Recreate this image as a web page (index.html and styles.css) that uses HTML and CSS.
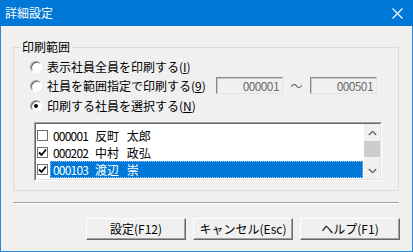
FILE: index.html
```html
<!DOCTYPE html>
<html lang="ja">
<head>
    <meta charset="utf-8">
    <link rel="stylesheet" href="styles.css">
</head>
<body>
    <div class="window">
        <div class="titlebar">
            <span class="title">詳細設定</span>
            <svg class="close" width="11" height="11" viewBox="0 0 11 11">
                <path d="M0.5 0.5 L10.5 10.5 M10.5 0.5 L0.5 10.5" stroke="#fff" stroke-width="1.1" fill="none"/>
            </svg>
        </div>
        <div class="dialog">
            <fieldset class="group">
                <legend>印刷範囲</legend>
                <div class="radio-row">
                    <span class="radio"></span>
                    <span>表示社員全員を印刷する(<u>I</u>)</span>
                </div>
                <div class="radio-row">
                    <span class="radio"></span>
                    <span>社員を範囲指定で印刷する(<u>9</u>)</span>
                    <span class="range">
                        <span class="field">000001</span>
                        <span class="tilde">～</span>
                        <span class="field">000501</span>
                    </span>
                </div>
                <div class="radio-row third">
                    <span class="radio checked"></span>
                    <span>印刷する社員を選択する(<u>N</u>)</span>
                </div>
                <div class="listbox">
                    <div class="list-inner">
                        <div class="rows">
                            <div class="row">
                                <span class="check"></span>
                                <span class="item"><span class="code">000001</span><span class="name">反町 太郎</span></span>
                            </div>
                            <div class="row">
                                <span class="check">
                                    <svg width="9" height="9" viewBox="0 0 9 9"><path d="M1 4.5 L3.5 7 L8 1.5" stroke="#000" stroke-width="1.8" fill="none"/></svg>
                                </span>
                                <span class="item"><span class="code">000202</span><span class="name">中村 政弘</span></span>
                            </div>
                            <div class="row">
                                <span class="check">
                                    <svg width="9" height="9" viewBox="0 0 9 9"><path d="M1 4.5 L3.5 7 L8 1.5" stroke="#000" stroke-width="1.8" fill="none"/></svg>
                                </span>
                                <span class="item selected"><span class="code">000103</span><span class="name">渡辺 崇</span></span>
                            </div>
                        </div>
                        <div class="scrollbar">
                            <span class="arrow">
                                <svg width="9" height="6" viewBox="0 0 9 6"><path d="M0.8 5 L4.5 1.3 L8.2 5" stroke="#606060" stroke-width="1.3" fill="none"/></svg>
                            </span>
                            <span class="track"><span class="thumb"></span></span>
                            <span class="arrow">
                                <svg width="9" height="6" viewBox="0 0 9 6"><path d="M0.8 1 L4.5 4.7 L8.2 1" stroke="#606060" stroke-width="1.3" fill="none"/></svg>
                            </span>
                        </div>
                    </div>
                </div>
            </fieldset>
            <div class="separator"></div>
            <div class="buttons">
                <button class="button">設定(F12)</button>
                <button class="button">キャンセル(Esc)</button>
                <button class="button">ヘルプ(F1)</button>
            </div>
        </div>
    </div>
</body>
</html>
```

FILE: styles.css
```css
body {
    margin: 0;
    font-family: "Noto Sans CJK JP", "Noto Sans", sans-serif;
    font-size: 12px;
    line-height: 14px;
    color: #000;
    background: #f0f0f0;
}

.window {
    width: 413px;
    height: 252px;
    display: flex;
    flex-direction: column;
}

.titlebar {
    height: 26px;
    flex: none;
    background: #0078d7;
    color: #fff;
    display: flex;
    align-items: center;
    justify-content: space-between;
    padding: 0 10px 0 5px;
}

.title {
    font-size: 12px;
}

.dialog {
    flex: 1;
    border: 1px solid #2b87d8;
    border-top: 0;
    background: #f0f0f0;
    padding: 14px 13px 0 12px;
    display: flex;
    flex-direction: column;
}

/* group box */
.group {
    margin: 0;
    padding: 3px 16px 9px 16px;
    border: 1px solid #dcdcdc;
}

.group legend {
    margin-left: -10px;
    padding: 0 2px;
    line-height: 14px;
}

.radio-row {
    height: 19px;
    display: flex;
    align-items: center;
}

.radio-row.third {
    margin-top: 1px;
}

.radio {
    width: 12px;
    height: 12px;
    box-sizing: border-box;
    border-radius: 50%;
    border: 1px solid;
    border-color: #a0a0a0 #ffffff #ffffff #a0a0a0;
    box-shadow: inset 1px 1px 0 #696969;
    background: #fff;
    margin-right: 5px;
    position: relative;
    flex: none;
}

.radio.checked::after {
    content: "";
    position: absolute;
    left: 3px;
    top: 3px;
    width: 4px;
    height: 4px;
    border-radius: 50%;
    background: #000;
}

.range {
    margin-left: auto;
    margin-right: 5px;
    display: flex;
    align-items: center;
}

.field {
    width: 67px;
    height: 17px;
    box-sizing: border-box;
    border: 1px solid;
    border-color: #8a8a8a #e3e3e3 #e3e3e3 #8a8a8a;
    box-shadow: inset 1px 1px 0 #c8c8c8;
    color: #6d6d6d;
    text-align: right;
    padding-right: 3px;
    line-height: 15px;
    letter-spacing: -0.6px;
}

.tilde {
    width: 27px;
    text-align: center;
    color: #6d6d6d;
}

/* check list */
.listbox {
    margin: 7px 0 0 4px;
    height: 59px;
    box-sizing: border-box;
    border: 1px solid;
    border-color: #a0a0a0 #ffffff #ffffff #a0a0a0;
}

.list-inner {
    height: 100%;
    box-sizing: border-box;
    border: 1px solid;
    border-color: #696969 #e3e3e3 #e3e3e3 #696969;
    background: #fff;
    display: flex;
}

.rows {
    flex: 1;
    padding-top: 3px;
}

.row {
    height: 17px;
    display: flex;
    align-items: center;
}

.check {
    width: 11px;
    height: 11px;
    box-sizing: border-box;
    border: 1px solid #6e6e6e;
    background: #fff;
    margin: 0 2px 0 1px;
    display: flex;
    align-items: center;
    justify-content: center;
    flex: none;
}

.item {
    flex: 1;
    height: 17px;
    box-sizing: border-box;
    padding-left: 2px;
    margin-right: 1px;
    display: flex;
    align-items: center;
    border: 1px solid transparent;
}

.item.selected {
    background: #0078d7;
    color: #fff;
    border: 1px dotted #9cc8ee;
}

.code {
    width: 42px;
    letter-spacing: -0.8px;
}

.name {
    word-spacing: 5px;
}

.scrollbar {
    width: 16px;
    background: #f0f0f0;
    display: flex;
    flex-direction: column;
}

.arrow {
    height: 17px;
    display: flex;
    align-items: center;
    justify-content: center;
    flex: none;
}

.track {
    flex: 1;
    display: flex;
    flex-direction: column;
}

.thumb {
    height: 16px;
    background: #cdcdcd;
}

/* bottom */
.separator {
    margin-top: 11px;
    border-top: 1px solid #a0a0a0;
    border-bottom: 1px solid #ffffff;
}

.buttons {
    margin-top: 14px;
    display: flex;
    justify-content: flex-end;
    gap: 7px;
    margin-right: -1px;
}

.button {
    width: 100px;
    height: 22px;
    padding: 0;
    font-family: inherit;
    font-size: 12px;
    line-height: 14px;
    color: #000;
    background: #f0f0f0;
    border: 1px solid;
    border-color: #ffffff #696969 #696969 #ffffff;
    box-shadow: inset -1px -1px 0 #a0a0a0;
}
```
